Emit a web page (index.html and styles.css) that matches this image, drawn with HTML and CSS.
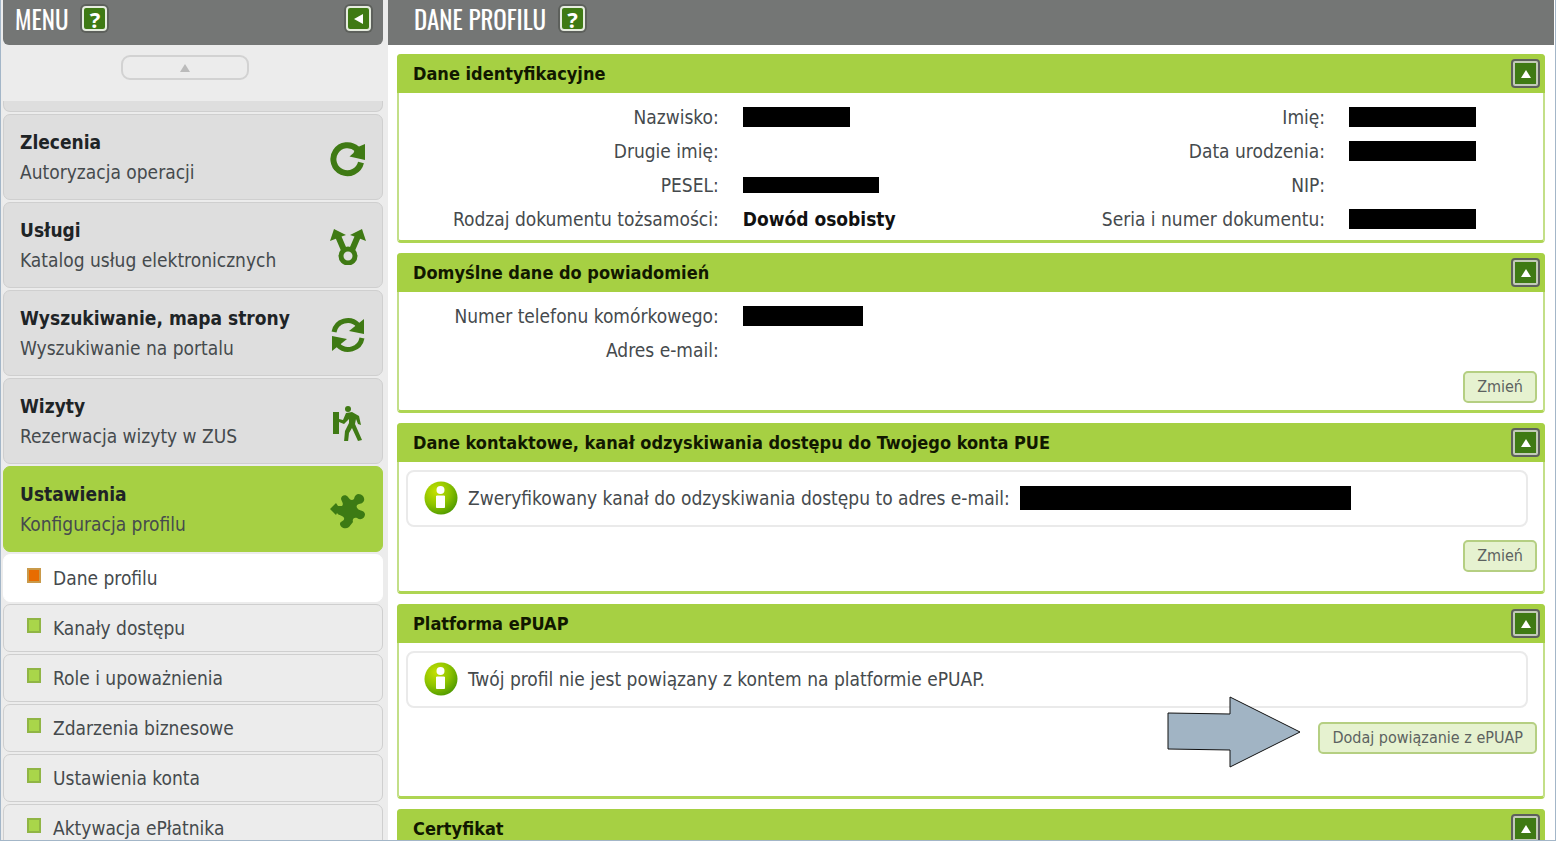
FILE: index.html
```html
<!DOCTYPE html>
<html lang="pl">
<head>
<meta charset="utf-8">
<title>Dane profilu</title>
<link rel="stylesheet" href="styles.css">
</head>
<body>
<svg class="defs" aria-hidden="true">
  <defs>
    <radialGradient id="ball" cx="0.35" cy="0.3" r="0.75">
      <stop offset="0" stop-color="#c4e000"/>
      <stop offset="0.55" stop-color="#8fc400"/>
      <stop offset="1" stop-color="#4f9a00"/>
    </radialGradient>
    <symbol id="info" viewBox="0 0 34 34">
      <circle cx="17" cy="17" r="16.500" fill="url(#ball)"/>
      <circle cx="16.500" cy="9" r="4" fill="#fff"/>
      <path d="M12.500 15h8v11.500h-8z" fill="#fff" stroke="#fff" stroke-width="1" stroke-linejoin="round"/>
    </symbol>
    <symbol id="up" viewBox="0 0 10 8"><path d="M5 0l5 8H0z" fill="currentColor"/></symbol>
  </defs>
</svg>
<div class="app">
  <aside class="sidebar">
    <header class="bar bar-menu">
      <h2 class="title">MENU</h2>
      <button class="square" type="button" aria-label="Pomoc">?</button>
      <button class="square square-end" type="button" aria-label="Zwiń menu"><svg width="9" height="10" viewBox="0 0 9 10"><path d="M9 0v10L0 5z" fill="#fff"/></svg></button>
    </header>
    <button class="scroll" type="button" aria-label="Przewiń w górę"><svg width="10" height="8"><use href="#up"/></svg></button>
    <nav class="menu">
      <div class="stub"></div>
      <a class="item" href="#"><span><b>Zlecenia</b>Autoryzacja operacji</span>
        <svg class="icon" viewBox="0 0 36 36"><path d="M31 21.500A14 14 0 1 1 27 8" fill="none" stroke="#3f7a14" stroke-width="6"/><path d="M35 3v16L19.500 15.500l4-3.500 2-5z" fill="#3f7a14"/></svg></a>
      <a class="item" href="#"><span><b>Usługi</b>Katalog usług elektronicznych</span>
        <svg class="icon" viewBox="0 0 36 36"><g fill="none" stroke="#3f7a14"><circle cx="18" cy="27" r="7" stroke-width="5"/><path d="M14 21L8 7M22 21L28 7" stroke-width="6"/></g><path d="M4 0l12 6-3 1-13 5zM32 0l-12 6 3 1 13 5z" fill="#3f7a14"/></svg></a>
      <a class="item" href="#"><span><b>Wyszukiwanie, mapa strony</b>Wyszukiwanie na portalu</span>
        <svg class="icon" viewBox="0 0 36 36"><path d="M4 15A14 14 0 0 1 28 8M32 21A14 14 0 0 1 8 28" fill="none" stroke="#3f7a14" stroke-width="5"/><path d="M34 2v15L19 14l5-4zM2 34V19l15 3-5 4z" fill="#3f7a14"/></svg></a>
      <a class="item" href="#"><span><b>Wizyty</b>Rezerwacja wizyty w ZUS</span>
        <svg class="icon" viewBox="0 0 36 36"><g fill="#3f7a14"><path d="M3 7h6v22H3z"/><circle cx="18" cy="4" r="3"/><path d="M16 8l6-1 7 4 2 9-3-1-2-5-1 5 7 16-4 1-6-13-3 5-1 9h-4l1-11 4-8v-4l-5 5-5-2v-3l4 1z"/></g></svg></a>
      <a class="item item-on" href="#"><span><b>Ustawienia</b>Konfiguracja profilu</span>
        <svg class="icon" viewBox="0 0 36 36"><g fill="#3c7a14"><path d="M11 6c0-4 5-5 7-2 2 3 4 4 6 2 1-6 6-6 9-3 3 4 0 8-4 8-3 1-3 3-1 5 2 2 6 1 7 5 0 4-4 7-8 4-3-1-5 1-4 4l-4 5c-4 3-9 0-9-3 0-3 5-3 4-6-1-3-5-2-7-5l1-2-2 4-6-6 6-6 2 3h4c2-2 0-4-1-7z"/></g></svg></a>
      <a class="sub sub-on" href="#">Dane profilu</a>
      <a class="sub" href="#">Kanały dostępu</a>
      <a class="sub" href="#">Role i upoważnienia</a>
      <a class="sub" href="#">Zdarzenia biznesowe</a>
      <a class="sub" href="#">Ustawienia konta</a>
      <a class="sub" href="#">Aktywacja ePłatnika</a>
    </nav>
  </aside>
  <main class="main">
    <header class="bar">
      <h1 class="title">DANE PROFILU</h1>
      <button class="square" type="button" aria-label="Pomoc">?</button>
    </header>
    <div class="panels">
      <section class="panel">
        <header class="head"><h3>Dane identyfikacyjne</h3><button class="toggle" type="button" aria-label="Zwiń"><svg width="10" height="8"><use href="#up"/></svg></button></header>
        <dl class="fields">
          <dt>Nazwisko:</dt><dd><span class="mask w-name"></span></dd>
          <dt>Imię:</dt><dd><span class="mask w-id"></span></dd>
          <dt>Drugie imię:</dt><dd></dd>
          <dt>Data urodzenia:</dt><dd><span class="mask w-id"></span></dd>
          <dt>PESEL:</dt><dd><span class="mask w-pesel"></span></dd>
          <dt>NIP:</dt><dd></dd>
          <dt>Rodzaj dokumentu tożsamości:</dt><dd>Dowód osobisty</dd>
          <dt>Seria i numer dokumentu:</dt><dd><span class="mask w-id"></span></dd>
        </dl>
      </section>
      <section class="panel">
        <header class="head"><h3>Domyślne dane do powiadomień</h3><button class="toggle" type="button" aria-label="Zwiń"><svg width="10" height="8"><use href="#up"/></svg></button></header>
        <dl class="fields fields-one">
          <dt>Numer telefonu komórkowego:</dt><dd><span class="mask w-phone"></span></dd>
          <dt>Adres e-mail:</dt><dd></dd>
        </dl>
        <div class="actions actions-tight"><button class="btn" type="button">Zmień</button></div>
      </section>
      <section class="panel">
        <header class="head"><h3>Dane kontaktowe, kanał odzyskiwania dostępu do Twojego konta PUE</h3><button class="toggle" type="button" aria-label="Zwiń"><svg width="10" height="8"><use href="#up"/></svg></button></header>
        <p class="note"><svg class="info"><use href="#info"/></svg><span>Zweryfikowany kanał do odzyskiwania dostępu to adres e-mail:</span><span class="mask w-mail"></span></p>
        <div class="actions"><button class="btn" type="button">Zmień</button></div>
      </section>
      <section class="panel">
        <header class="head"><h3>Platforma ePUAP</h3><button class="toggle" type="button" aria-label="Zwiń"><svg width="10" height="8"><use href="#up"/></svg></button></header>
        <p class="note"><svg class="info"><use href="#info"/></svg><span>Twój profil nie jest powiązany z kontem na platformie ePUAP.</span></p>
        <div class="actions actions-tall">
          <div class="pointed">
            <svg class="arrow" viewBox="0 0 134 72" aria-hidden="true"><path d="M1 17l62 1V1l70 35-70 35V54L1 53z" fill="#a1b4c4" stroke="#111"/></svg>
            <button class="btn" type="button">Dodaj powiązanie z ePUAP</button>
          </div>
        </div>
      </section>
      <section class="panel">
        <header class="head"><h3>Certyfikat</h3><button class="toggle" type="button" aria-label="Zwiń"><svg width="10" height="8"><use href="#up"/></svg></button></header>
      </section>
    </div>
  </main>
</div>
</body>
</html>
```
FILE: styles.css
```css
*, *::before { box-sizing: border-box; }
body {
  margin: 0;
  height: 100vh;
  overflow: hidden;
  background: #fff;
  color: #454a4d;
  font: 19px/30px "DejaVu Sans Condensed", "Noto Sans", sans-serif;
}
h1, h2, h3, p, dl, dd { margin: 0; }
button { font: inherit; padding: 0; cursor: pointer; }
a { color: inherit; text-decoration: none; }
.defs { position: absolute; width: 0; height: 0; }

.app {
  display: flex;
  height: 100vh;
  overflow: hidden;
  border: 1px solid #a3b6c8;
  border-top: 0;
}
.sidebar {
  flex: none;
  width: 387px;
  padding: 0 5px 0 2px;
  background: #ececec;
}
.main { flex: 1; min-width: 0; margin-right: 1px; }

.bar {
  display: flex;
  align-items: center;
  gap: 14px;
  height: 45px;
  padding: 0 12px 8px 26px;
  background: #747675;
}
.bar-menu { padding-left: 12px; border-radius: 0 0 6px 6px; }
.title {
  color: #fff;
  font: 25px/32px "Oswald", "Roboto Condensed", "Open Sans Condensed", "Noto Sans ExtraCondensed", "Liberation Sans Narrow", "Liberation Sans", sans-serif;
}
.square, .toggle {
  display: flex;
  align-items: center;
  justify-content: center;
  width: 25px;
  height: 25px;
  border: 2px solid #e6ecdf;
  border-radius: 4px;
  background: #3f7a14;
  box-shadow: 0 0 0 2px #5d605c;
  color: #fff;
  font: bold 22px/22px "Noto Sans", sans-serif;
}
.toggle { border-color: #c3cbb8; border-radius: 2px; }
.square-end { margin-left: auto; }

.scroll {
  display: flex;
  align-items: center;
  justify-content: center;
  width: 128px;
  height: 25px;
  margin: 10px auto 21px 118px;
  border: 2px solid #d2d2d2;
  border-radius: 9px;
  background: transparent;
  color: #bbb;
}
.menu { display: flex; flex-direction: column; gap: 2px; }
.stub {
  height: 11px;
  border: 1px solid #cfcfcf;
  border-top: 0;
  border-radius: 0 0 7px 7px;
  background: #dedede;
}
.item {
  display: flex;
  align-items: center;
  justify-content: space-between;
  height: 86px;
  padding: 0 16px;
  border: 1px solid #cfcfcf;
  border-radius: 7px;
  background: #dedede;
}
.item b { display: block; color: #1e2426; }
.item-on { border-color: #a6d043; background: #a6d043; }
.icon { width: 36px; height: 36px; margin-top: 4px; }

.sub {
  display: flex;
  align-items: center;
  gap: 12px;
  height: 48px;
  padding: 0 24px 0 23px;
  border: 1px solid #cfcfcf;
  border-radius: 7px;
  background: #ececec;
}
.sub::before {
  content: "";
  width: 14px;
  height: 15px;
  margin-bottom: 6px;
  border: 2px solid #90b545;
  background: #a9d64a;
}
.sub-on { border-color: #fff; background: #fff; }
.sub-on::before { border-color: #c99a4a; background: #e86c00; }

.panels {
  display: flex;
  flex-direction: column;
  gap: 10px;
  padding: 9px 9px 0;
}
.panel {
  border: 2px solid #c3df88;
  border-width: 0 2px 3px;
  border-bottom-color: #aed553;
  border-radius: 4px;
}
.head {
  display: flex;
  align-items: center;
  justify-content: space-between;
  height: 39px;
  margin: 0 -2px;
  padding: 0 7px 0 16px;
  border-radius: 4px 4px 0 0;
  background: #a6d043;
  color: #111800;
}
.head h3 { font-size: 18px; line-height: 30px; }

.fields {
  display: grid;
  grid-template-columns: 29fr 28fr 25fr 18fr;
  grid-auto-rows: 34px;
  align-items: center;
  padding: 7px 0 4px;
}
.fields-one { grid-template-columns: 29fr 71fr; }
.fields dt { padding-right: 12px; text-align: right; }
.fields dd { padding-left: 12px; color: #111; font-weight: bold; }
.mask { display: block; height: 20px; background: #000; }
.w-name { width: 107px; }
.w-id { width: 127px; }
.w-pesel { width: 136px; height: 16px; }
.w-phone { width: 120px; }
.w-mail { width: 331px; height: 24px; }

.note {
  display: flex;
  align-items: center;
  gap: 10px;
  height: 57px;
  margin: 8px 15px 0 7px;
  padding: 0 16px 2px;
  border: 2px solid #eaeaea;
  border-radius: 8px;
}
.info { flex: none; width: 34px; height: 34px; }

.actions {
  display: flex;
  justify-content: flex-end;
  padding: 13px 6px 19px;
}
.actions-tight { padding: 0 6px 7px; }
.actions-tall { padding-bottom: 42px; }
.btn {
  height: 32px;
  padding: 0 12px;
  border: 2px solid #b5cf82;
  border-radius: 5px;
  background: #e6f2d0;
  color: #5c6260;
  font-size: 16px;
  line-height: 28px;
}
.pointed { position: relative; }
.arrow {
  position: absolute;
  right: 100%;
  top: -25px;
  width: 134px;
  height: 72px;
  margin-right: 17px;
}
```
